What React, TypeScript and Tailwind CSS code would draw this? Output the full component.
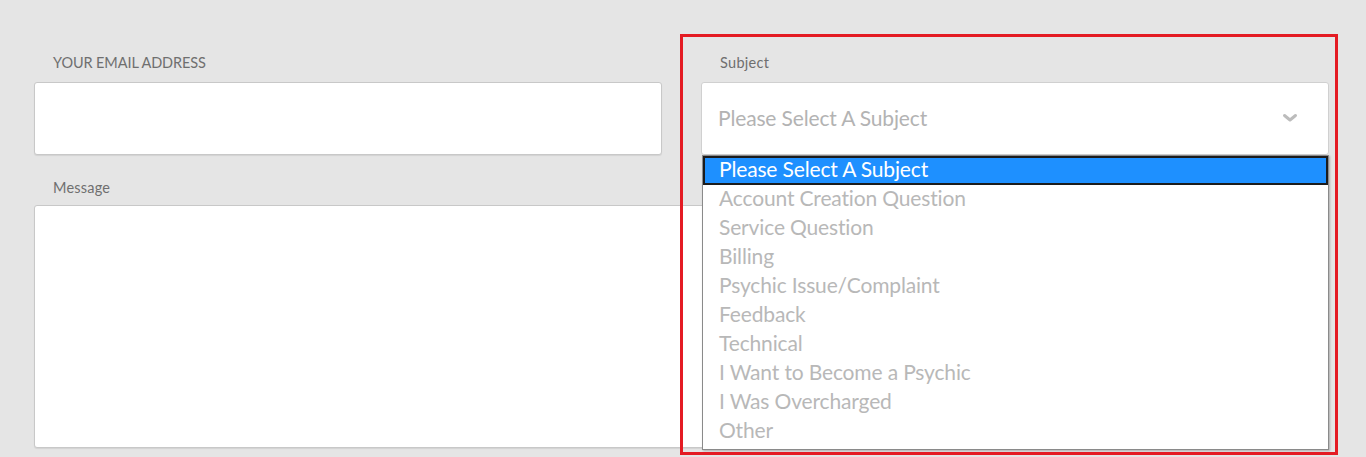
import React from "react";

const options = [
  "Account Creation Question",
  "Service Question",
  "Billing",
  "Psychic Issue/Complaint",
  "Feedback",
  "Technical",
  "I Want to Become a Psychic",
  "I Was Overcharged",
  "Other",
];

export default function App() {
  return (
    <div
      className="relative h-[457px] w-[1366px] overflow-hidden bg-[#e5e5e5] pl-[34px] pr-[37px] pt-[54px]"
      style={{ fontFamily: "Lato, 'Open Sans', sans-serif" }}
    >
      <div className="grid grid-cols-2 gap-x-[39px]">
        <div className="flex flex-col">
          <label className="pl-[19px] text-[14.5px] leading-[18px] text-[#6f6f6f] tracking-[-0.1px]">
            YOUR EMAIL ADDRESS
          </label>
          <div className="mt-[10px] h-[73px] rounded-[3px] border border-[#c8c8c8] bg-white shadow-[0_1px_1px_rgba(0,0,0,0.08)]" />
        </div>
        <div className="relative flex flex-col">
          <label className="pl-[19px] text-[14.5px] leading-[18px] text-[#6f6f6f] tracking-[0.3px]">Subject</label>
          <div className="mt-[10px] flex h-[73px] items-center justify-between rounded-[3px] border border-[#d0d0d0] bg-white pb-[2px] pl-[16px] pr-[30px]">
            <span className="text-[21px] text-[#b3b3b3] tracking-[-0.15px]">Please Select A Subject</span>
            <svg width="16" height="10" viewBox="0 0 16 10">
              <path d="M2.5 2.5 L8 7 L13.5 2.5" fill="none" stroke="#bcbcbc" strokeWidth="3" strokeLinecap="round" strokeLinejoin="round" />
            </svg>
          </div>
          <div className="absolute left-[1px] right-0 top-[101px] z-10 flex flex-col border border-[#8a8a8a] bg-white pb-[3px] shadow-[1px_1px_2px_rgba(0,0,0,0.25)]">
            <div className="flex h-[29px] items-center border-2 border-[#1c1c1c] bg-[#1e90ff] pb-[3px] pl-[14px] text-[21px] text-white tracking-[-0.15px]">
              Please Select A Subject
            </div>
            {options.map((o) => (
              <div key={o} className="flex h-[29px] items-center pb-[3px] pl-[16px] text-[21px] text-[#b8b8b8] tracking-[-0.15px]">
                {o}
              </div>
            ))}
          </div>
        </div>
      </div>
      <label className="mt-[24px] block pl-[19px] text-[14.5px] leading-[18px] text-[#6f6f6f] tracking-[0.2px]">Message</label>
      <div className="mt-[8px] h-[243px] rounded-[3px] border border-[#c8c8c8] bg-white shadow-[0_1px_1px_rgba(0,0,0,0.08)]" />
      <div className="pointer-events-none absolute left-[680px] top-[34px] z-20 h-[421px] w-[658px] border-[3px] border-[#e41b23]" />
    </div>
  );
}
